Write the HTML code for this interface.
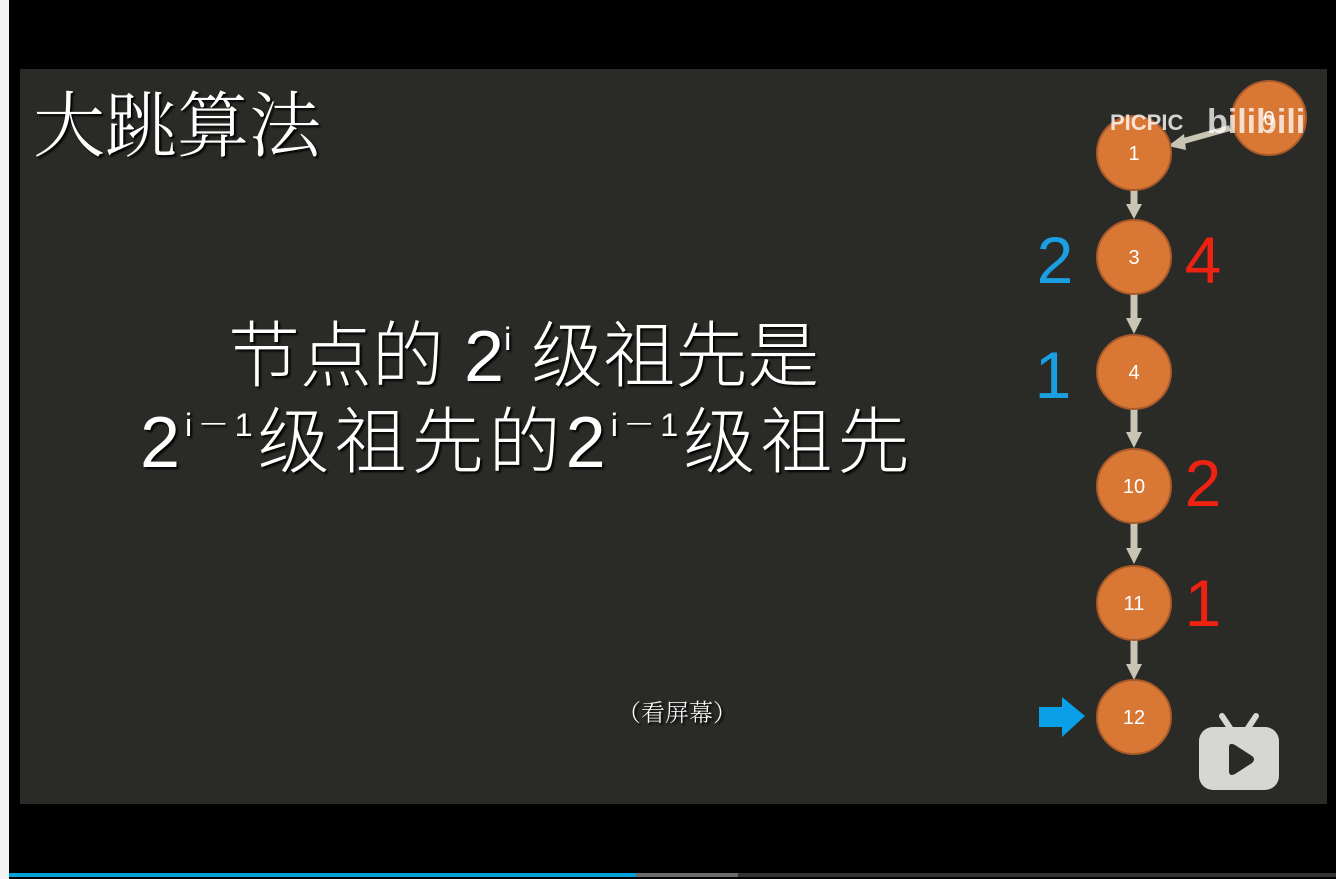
<!DOCTYPE html>
<html><head><meta charset="utf-8"><style>
html,body{margin:0;padding:0;}
body{width:1336px;height:879px;background:#000;position:relative;overflow:hidden;font-family:"Liberation Sans","Noto Sans CJK SC",sans-serif;}
.ls{position:absolute;left:0;top:0;width:9px;height:879px;background:#f4f4f4;}
.slide{position:absolute;left:20px;top:69px;width:1307px;height:735px;background:#2a2a27;}
.t{position:absolute;color:#fff;white-space:nowrap;font-family:"Noto Serif CJK SC","Liberation Sans",serif;font-weight:300;text-shadow:2px 2px 2px #000;}
.m{position:absolute;color:#fff;white-space:nowrap;font-family:"Liberation Sans","Noto Sans CJK SC",sans-serif;font-weight:300;text-shadow:2px 2px 2px #000;}
sup{font-size:0.45em;vertical-align:0;position:relative;top:-0.95em;}
.bar{position:absolute;top:873px;height:4px;}
</style></head><body>
<div class="ls"></div>
<div class="slide"></div>
<div class="t" style="left:33px;top:74px;font-size:72px;line-height:92px;">大跳算法</div>
<div class="m" style="left:228px;top:312px;font-size:72px;line-height:90px;">节点的 2<sup>i</sup> 级祖先是</div>
<div class="m" style="left:140px;top:398px;font-size:72px;line-height:90px;letter-spacing:5px;">2<sup>i－1</sup>级祖先的2<sup>i－1</sup>级祖先</div>
<div class="m" style="left:617px;top:695px;font-size:24px;line-height:32px;font-family:'Noto Serif CJK SC',serif;">（看屏幕）</div>
<svg style="position:absolute;left:0;top:0" width="1336" height="879">
<g fill="#c9c5b4" stroke="#c9c5b4">
<line x1="1230" y1="128" x2="1180" y2="142" stroke-width="6"/>
<polygon points="1168,146 1184,134 1186,150" stroke="none"/>
<g stroke-width="7">
<line x1="1134" y1="190" x2="1134" y2="208"/>
<line x1="1134" y1="294" x2="1134" y2="322"/>
<line x1="1134" y1="409" x2="1134" y2="436"/>
<line x1="1134" y1="523" x2="1134" y2="552"/>
<line x1="1134" y1="640" x2="1134" y2="666"/>
</g>
<g stroke="none">
<polygon points="1126,204 1142,204 1134,219"/>
<polygon points="1126,318 1142,318 1134,334"/>
<polygon points="1126,432 1142,432 1134,448"/>
<polygon points="1126,548 1142,548 1134,564"/>
<polygon points="1126,664 1142,664 1134,680"/>
</g>
</g>
<g fill="#d97834" stroke="#a95a2a" stroke-width="2">
<circle cx="1269" cy="118" r="37"/>
<circle cx="1134" cy="153" r="37"/>
<circle cx="1134" cy="257" r="37"/>
<circle cx="1134" cy="372" r="37"/>
<circle cx="1134" cy="486" r="37"/>
<circle cx="1134" cy="603" r="37"/>
<circle cx="1134" cy="717" r="37"/>
</g>
<g fill="#fff" font-family="Liberation Sans,sans-serif" font-size="20" text-anchor="middle">
<text x="1269" y="125">0</text>
<text x="1134" y="160">1</text>
<text x="1134" y="264">3</text>
<text x="1134" y="379">4</text>
<text x="1134" y="493">10</text>
<text x="1134" y="610">11</text>
<text x="1134" y="724">12</text>
</g>
<g font-family="Liberation Sans,sans-serif" font-size="66" font-weight="300" text-anchor="middle">
<text x="1055" y="283" fill="#1a9fe2">2</text>
<text x="1203" y="283" fill="#ee2211">4</text>
<text x="1053" y="398" fill="#1a9fe2">1</text>
<text x="1203" y="506" fill="#ee2211">2</text>
<text x="1203" y="626" fill="#ee2211">1</text>
</g>
<polygon points="1039,707 1062,707 1062,697 1085,716 1062,737 1062,727 1039,727" fill="#0aa0e8"/>
<text x="1110" y="130" fill="#fff" fill-opacity="0.8" font-family="Liberation Sans,sans-serif" font-weight="bold" font-size="22">PICPIC</text>
<text x="1207" y="133" fill="#fff" fill-opacity="0.75" font-family="Liberation Sans,sans-serif" font-weight="bold" font-size="34">bilibili</text>
<g fill="#d6d6d4">
<rect x="1199" y="727" width="80" height="63" rx="14"/>
<line x1="1222" y1="716" x2="1230" y2="728" stroke="#d6d6d4" stroke-width="6" stroke-linecap="round"/>
<line x1="1256" y1="716" x2="1248" y2="728" stroke="#d6d6d4" stroke-width="6" stroke-linecap="round"/>
</g>
<path d="M1229 747 L1229 771 Q1229 777 1235 774 L1252 763 Q1256 759 1252 756 L1235 745 Q1229 742 1229 747Z" fill="#2a2a27"/>
</svg>
<div class="bar" style="left:9px;width:627px;background:#00a1d6;"></div>
<div class="bar" style="left:636px;width:102px;background:#6b6b6b;"></div>
<div class="bar" style="left:738px;width:598px;background:#333;"></div>
</body></html>
